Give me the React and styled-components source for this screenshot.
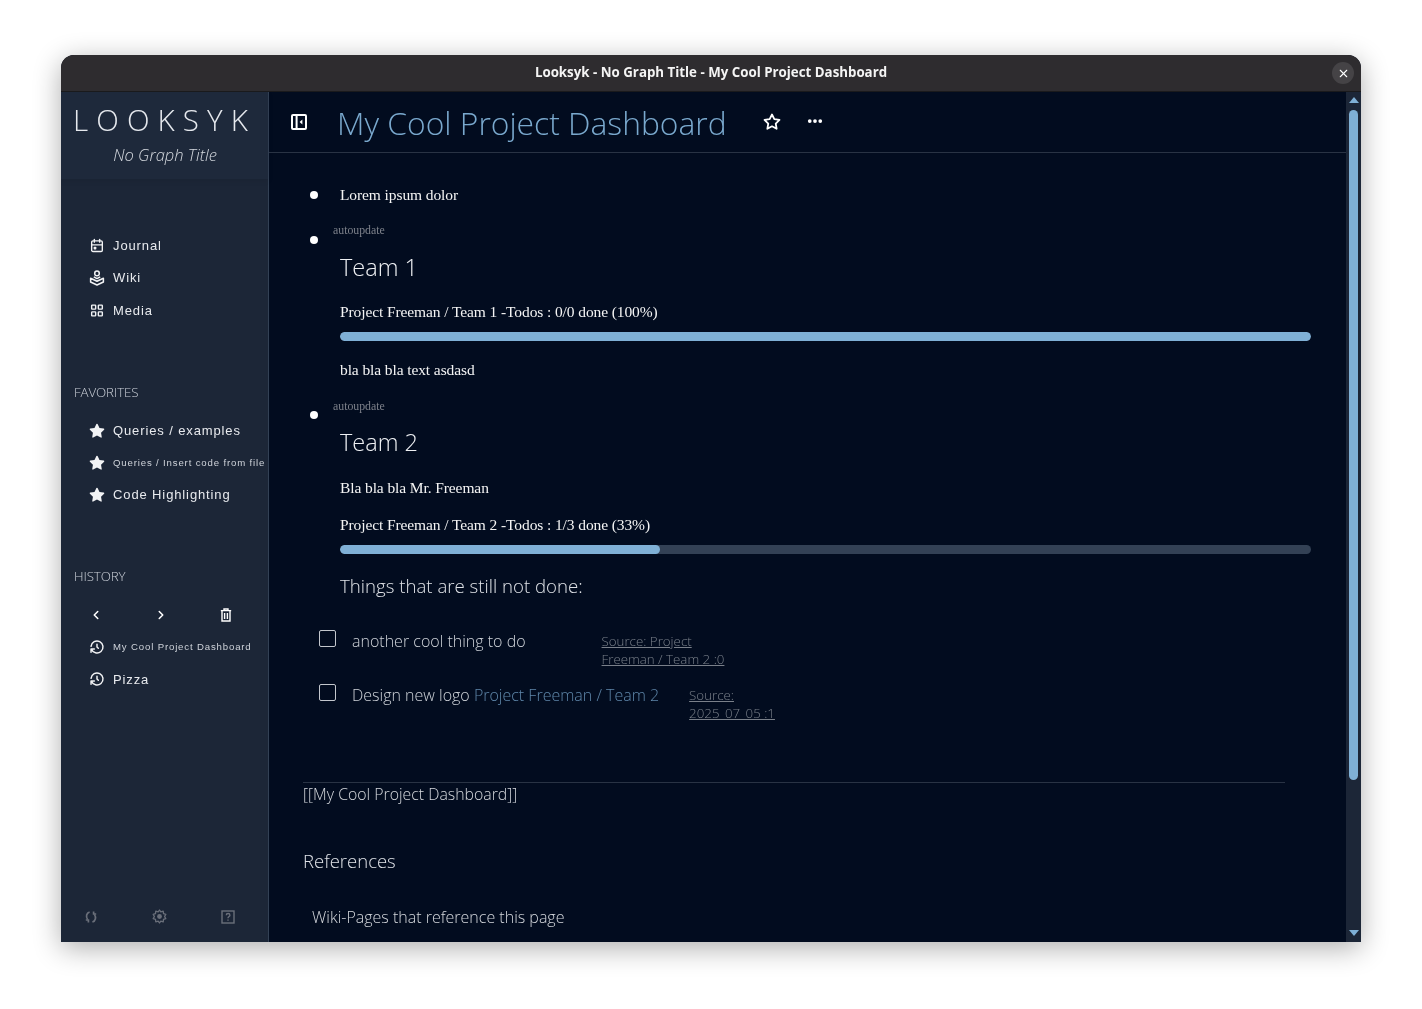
import React from "react";
import styled, { createGlobalStyle } from "styled-components";
import { TbCalendarEvent, TbLayoutGrid, TbStarFilled, TbStar, TbHistory, TbChevronLeft, TbChevronRight, TbDots, TbX } from "react-icons/tb";

const Global = createGlobalStyle`
  html, body { margin: 0; padding: 0; background: #fff; height: 1009px; overflow: hidden; }
  * { box-sizing: border-box; }
`;
const OPEN = `"Open Sans", "Liberation Sans", sans-serif`;
const SERIF = `"Liberation Serif", serif`;
const SANS = `"Liberation Sans", sans-serif`;

const Page = styled.div`padding: 55px 61px 0; height: 1009px;`;
const Win = styled.div`
  width: 1300px; height: 887px; display: flex; flex-direction: column;
  border-radius: 13px 13px 0 0; overflow: hidden; background: #020c1f;
  box-shadow: 0 6px 28px rgba(0,0,0,.32);
  will-change: transform;
`;
const TitleBar = styled.div`
  height: 37px; flex: none; background: #2e2c2f; border-bottom: 1px solid #1a1a1c; position: relative;
  display: flex; align-items: center; justify-content: center; padding-bottom: 1px;
  font: 700 13.3px/1 ${OPEN}; color: #f4f4f4;
`;
const CloseBtn = styled.button`
  position: absolute; right: 7px; top: 7px; width: 22px; height: 22px; border: 0; padding: 0; border-radius: 50%;
  background: #454346; color: #fff; display: flex; align-items: center; justify-content: center;
`;
const Body = styled.div`flex: 1; display: flex; min-height: 0;`;
const Side = styled.aside`
  width: 208px; flex: none; background: #1c2637; border-right: 1px solid #334155;
  display: flex; flex-direction: column;
`;
const Brand = styled.div`
  height: 87px; flex: none; background: #1e293b; box-shadow: 0 2px 6px rgba(0,0,0,.08);
  padding-top: 10px; text-align: center; color: #e6e9ee;
`;
const Logo = styled.div`font: 200 29.5px/36px ${OPEN}; letter-spacing: 8.1px; white-space: nowrap;`;
const Sub = styled.div`font: italic 300 16.5px/22px ${OPEN}; margin-top: 6px; padding-left: 1px; color: #d5d9df;`;
const Nav = styled.nav`display: flex; flex-direction: column; padding: ${p => p.$pt}px 0 0 28px;`;
const NavItem = styled.div`
  height: ${p => p.$h || 32.5}px; display: flex; align-items: center; gap: 8px; white-space: nowrap;
  font: ${p => p.$small ? 9.6 : 13}px/1 ${SANS}; letter-spacing: ${p => p.$small ? 0.85 : 0.88}px;
  color: ${p => p.$small ? "#cfd3da" : "#e8eaee"};
`;
const NavIcon = styled.span`width: 16px; height: 16px; flex: none; display: flex; align-items: center; justify-content: center; color: #f2f3f5;`;
const SecTitle = styled.div`
  font: 300 13.3px/18px ${OPEN}; color: #cbd0d8; padding-left: 13px; letter-spacing: -.1px;
  margin-top: ${p => p.$mt}px;
`;
const HistCtl = styled.div`display: grid; grid-template-columns: 65px 65px auto; align-items: center; height: 30px; padding-left: 28px; margin-top: 15px; color: #fff;`;
const SideFoot = styled.div`margin-top: auto; height: 50px; display: grid; grid-template-columns: 68px 69px auto; align-items: center; padding-left: 23px; color: #6a6f7a; padding-bottom: 1px;`;

const Main = styled.main`flex: 1; min-width: 0; display: flex; flex-direction: column; overflow: hidden;`;
const Head = styled.header`
  height: 61px; flex: none; border-bottom: 1px solid #293344; display: flex; align-items: center; padding-left: 21px; color: #fff;
`;
const PageTitle = styled.h1`margin: 0 0 0 29px; font: 300 31.8px/1 ${OPEN}; color: #7aa9ce; white-space: nowrap; padding-top: 1px;`;
const HeadBtn = styled.span`display: inline-flex; margin-left: ${p => p.$ml}px; margin-top: ${p => p.$mt}px;`;
const Content = styled.div`flex: 1; overflow: hidden; padding: 0 0 0 35px; color: #f4f4f4;`;
const Block = styled.div`display: flex; align-items: flex-start; padding-top: ${p => p.$pt}px;`;
const Bullet = styled.span`
  width: 8px; height: 8px; border-radius: 50%; background: #fff; flex: none; margin: ${p => p.$mt}px 0 0 6px;
`;
const BlockBody = styled.div`margin-left: 22px; width: 971px;`;
const Auto = styled.div`font: 11.8px/12px ${SERIF}; padding-bottom: 2px; color: #7d818a; margin-left: -7px;`;
const Para = styled.p`font: 15.5px/18px ${SERIF}; padding-bottom: 2px; letter-spacing: -.1px; margin: ${p => p.$mt}px 0 0; color: #f4f4f4;`;
const H2 = styled.h2`font: 300 23.5px/32px ${OPEN}; margin: ${p => p.$mt}px 0 0; color: #eef0f3;`;
const Track = styled.div`height: 9px; border-radius: 5px; background: #334155; margin-top: ${p => p.$mt}px; overflow: hidden;`;
const Fill = styled.div`height: 100%; border-radius: 5px; background: #7fb0d6;`;
const H3 = styled.h3`font: 300 18.65px/26px ${OPEN}; margin: ${p => p.$mt}px 0 0; color: #dfe2e7;`;
const Tasks = styled.div`margin-left: -35px; margin-top: 33px; display: flex; flex-direction: column; gap: 18px;`;
const Task = styled.div`display: flex; align-items: flex-start; padding-left: 14px; font: 300 16px/18px ${OPEN}; color: #cfd3d9;`;
const Box = styled.span`width: 17px; height: 17px; border: 1px solid #c3c7cd; border-radius: 2px; flex: none; margin: -2px 16px 0 0;`;
const TaskLink = styled.a`color: #5f87aa;`;
const Source = styled.a`
  font: 300 13.3px/18px ${OPEN}; color: #7a808a; text-decoration: underline; width: ${p => p.$w}px; margin-left: ${p => p.$ml}px; flex: none;
`;
const Rule = styled.hr`margin: 0; border: 0; border-top: 1px solid #293344; width: 982px;`;
const Foot = styled.div`margin: 60px 0 0 -1px;`;
const LinkLine = styled.div`font: 300 15.85px/22px ${OPEN}; color: #d5d8dd;`;
const Refs = styled.h3`font: 300 18.5px/26px ${OPEN}; color: #dfe2e7; margin: 43px 0 0;`;
const WikiRef = styled.div`font: 300 16px/22px ${OPEN}; color: #d5d8dd; margin: 32px 0 0 9px;`;

const Bar = styled.div`width: 15px; flex: none; background: #1c2637; display: flex; flex-direction: column; align-items: center; padding: 5px 0 6px;`;
const Arrow = styled.span`
  width: 0; height: 0; border-left: 5px solid transparent; border-right: 5px solid transparent;
  ${p => p.$down ? "border-top: 6px solid #7fb0d6;" : "border-bottom: 6px solid #7fb0d6;"}
  margin-top: ${p => p.$down ? "auto" : "0"};
`;
const Thumb = styled.div`width: 9px; height: 670px; background: #7fb0d6; border-radius: 5px; margin-top: 7px;`;
const Row = styled.div`display: flex; flex: 1; min-width: 0; min-height: 0;`;

const WikiIcon = () => (
  <svg width="16" height="16" viewBox="0 0 16 16" fill="none" stroke="currentColor" strokeWidth="1.5" strokeLinejoin="round">
    <circle cx="8" cy="3.4" r="2.3" />
    <path d="M4.8 6.8 8 8.6l3.2-1.8M1.6 8.2 8 11.2l6.4-3v3.8L8 15 1.6 12z" />
  </svg>
);
const Trash = () => (
  <svg width="14" height="14" viewBox="0 0 14 14" fill="none" stroke="currentColor" strokeWidth="1.4">
    <path d="M1.8 2.6h10.4M5 2.4V1h4v1.4M3 2.8v10.2h8V2.8M5.6 5v6M8.4 5v6" />
  </svg>
);
const SyncIcon = () => (
  <svg width="14" height="14" viewBox="0 0 14 14" fill="none" stroke="currentColor" strokeWidth="1.7">
    <path d="M5.6 2C2.4 3 1.6 6.6 3.6 9.6M8.4 12c3.2-1 4-4.6 2-7.6" />
    <path d="M1.8 10h2.6v2.6M12.2 4H9.6V1.4" />
  </svg>
);
const GearIcon = () => (
  <svg width="15" height="15" viewBox="0 0 15 15" fill="none" stroke="currentColor" strokeWidth="1.3" strokeLinejoin="round">
    <path d="M7.5 1 8.8 2.9 11.2 2.2 11.5 4.6 13.8 5.4 12.6 7.5 13.8 9.6 11.5 10.4 11.2 12.8 8.8 12.1 7.5 14 6.2 12.1 3.8 12.8 3.5 10.4 1.2 9.6 2.4 7.5 1.2 5.4 3.5 4.6 3.8 2.2 6.2 2.9z" />
    <circle cx="7.5" cy="7.5" r="2.4" fill="currentColor" stroke="none" />
  </svg>
);
const HelpIcon = () => (
  <svg width="14" height="14" viewBox="0 0 14 14" fill="none" stroke="currentColor" strokeWidth="1.4">
    <rect x="1" y="1" width="12" height="12" />
    <path d="M5.3 5.2c0-2.2 3.6-2.2 3.6 0 0 1.4-1.9 1.3-1.9 3M7 9.4v1.4" />
  </svg>
);
const ToggleIcon = () => (
  <svg width="18" height="18" viewBox="0 0 18 18" fill="none">
    <rect x="2" y="2" width="14" height="14" rx="1" stroke="#fff" strokeWidth="2" />
    <path d="M6.6 2v14" stroke="#fff" strokeWidth="2" />
    <path d="M12.4 6.6v5L9.6 9.1z" fill="#fff" />
  </svg>
);

export default function App() {
  return (
    <Page>
      <Global />
      <Win>
        <TitleBar>
          Looksyk - No Graph Title - My Cool Project Dashboard
          <CloseBtn aria-label="close"><TbX size={13} strokeWidth={2} /></CloseBtn>
        </TitleBar>
        <Body>
          <Side>
            <Brand>
              <Logo>LOOKSYK</Logo>
              <Sub>No Graph Title</Sub>
            </Brand>
            <Nav $pt={50}>
              <NavItem><NavIcon><TbCalendarEvent size={21} strokeWidth={2.1} /></NavIcon>Journal</NavItem>
              <NavItem><NavIcon><WikiIcon /></NavIcon>Wiki</NavItem>
              <NavItem><NavIcon><TbLayoutGrid size={21} strokeWidth={2.1} /></NavIcon>Media</NavItem>
            </Nav>
            <SecTitle $mt={56}>FAVORITES</SecTitle>
            <Nav $pt={14}>
              <NavItem $h={32}><NavIcon><TbStarFilled size={16} /></NavIcon>Queries / examples</NavItem>
              <NavItem $h={32} $small><NavIcon><TbStarFilled size={16} /></NavIcon>Queries / Insert code from file</NavItem>
              <NavItem $h={32}><NavIcon><TbStarFilled size={16} /></NavIcon>Code Highlighting</NavItem>
            </Nav>
            <SecTitle $mt={56}>HISTORY</SecTitle>
            <HistCtl>
              <TbChevronLeft size={14} strokeWidth={2.6} />
              <TbChevronRight size={14} strokeWidth={2.6} />
              <Trash />
            </HistCtl>
            <Nav $pt={1}>
              <NavItem $h={32.5} $small><NavIcon><TbHistory size={18} strokeWidth={2.2} /></NavIcon>My Cool Project Dashboard</NavItem>
              <NavItem $h={32.5}><NavIcon><TbHistory size={18} strokeWidth={2.2} /></NavIcon>Pizza</NavItem>
            </Nav>
            <SideFoot>
              <SyncIcon />
              <GearIcon />
              <HelpIcon />
            </SideFoot>
          </Side>
          <Row>
            <Main>
              <Head>
                <ToggleIcon />
                <PageTitle>My Cool Project Dashboard</PageTitle>
                <HeadBtn $ml={36} $mt={0}><TbStar size={18} strokeWidth={2.4} /></HeadBtn>
                <HeadBtn $ml={25} $mt={-2}><TbDots size={18} strokeWidth={3} /></HeadBtn>
              </Head>
              <Content>
                <Block $pt={33}>
                  <Bullet $mt={5} />
                  <BlockBody><Para $mt={0}>Lorem ipsum dolor</Para></BlockBody>
                </Block>
                <Block $pt={18}>
                  <Bullet $mt={12} />
                  <BlockBody>
                    <Auto>autoupdate</Auto>
                    <H2 $mt={13}>Team 1</H2>
                    <Para $mt={20}>Project Freeman / Team 1 -Todos : 0/0 done (100%)</Para>
                    <Track $mt={9}><Fill style={{ width: "100%" }} /></Track>
                    <Para $mt={20}>bla bla bla text asdasd</Para>
                  </BlockBody>
                </Block>
                <Block $pt={19}>
                  <Bullet $mt={11} />
                  <BlockBody>
                    <Auto>autoupdate</Auto>
                    <H2 $mt={12}>Team 2</H2>
                    <Para $mt={21}>Bla bla bla Mr. Freeman</Para>
                    <Para $mt={17}>Project Freeman / Team 2 -Todos : 1/3 done (33%)</Para>
                    <Track $mt={9}><Fill style={{ width: "33%" }} /></Track>
                    <H3 $mt={19}>Things that are still not done:</H3>
                    <Tasks>
                      <Task>
                        <Box />
                        <span>another cool thing to do</span>
                        <Source $w={130} $ml={76}>Source: Project Freeman / Team 2 :0</Source>
                      </Task>
                      <Task>
                        <Box />
                        <span>Design new logo <TaskLink>Project Freeman / Team 2</TaskLink></span>
                        <Source $w={100} $ml={30}>Source: 2025_07_05 :1</Source>
                      </Task>
                    </Tasks>
                  </BlockBody>
                </Block>
                <Foot>
                  <Rule />
                  <LinkLine>[[My Cool Project Dashboard]]</LinkLine>
                  <Refs>References</Refs>
                  <WikiRef>Wiki-Pages that reference this page</WikiRef>
                </Foot>
              </Content>
            </Main>
            <Bar>
              <Arrow />
              <Thumb />
              <Arrow $down />
            </Bar>
          </Row>
        </Body>
      </Win>
    </Page>
  );
}
